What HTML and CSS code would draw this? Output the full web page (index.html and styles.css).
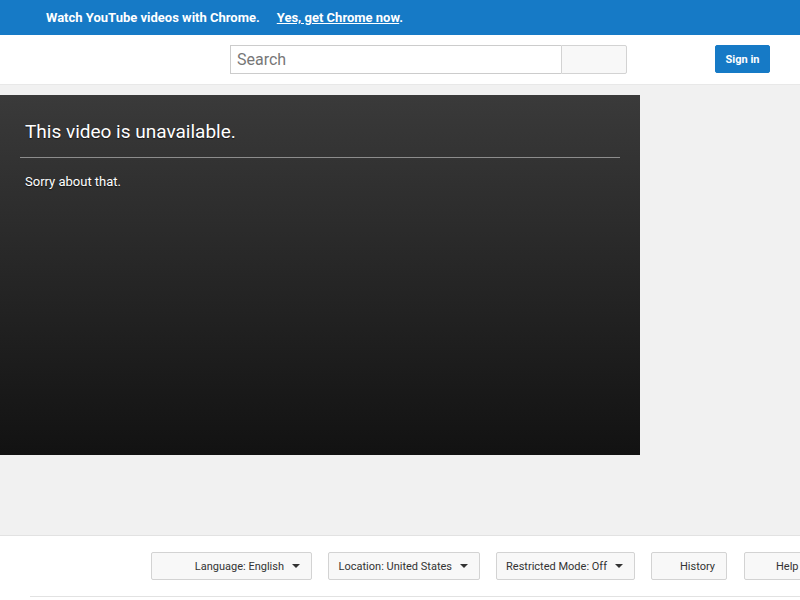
FILE: index.html
```html
<!DOCTYPE html>
<html>
<head>
<meta charset="utf-8">
<link rel="stylesheet" href="styles.css">
</head>
<body>
<div class="banner">
  <span class="banner-text">Watch YouTube videos with Chrome.</span>
  <span class="banner-link"><a href="#">Yes, get Chrome now</a>.</span>
</div>
<header class="masthead">
  <div class="search">
    <input class="search-input" type="text" placeholder="Search">
    <button class="search-btn"></button>
  </div>
  <button class="signin">Sign in</button>
</header>
<main class="content">
  <div class="player">
    <h1 class="player-title">This video is unavailable.</h1>
    <div class="player-rule"></div>
    <p class="player-msg">Sorry about that.</p>
  </div>
</main>
<footer class="footer">
  <div class="footer-buttons">
    <button class="fbtn fbtn-lang">Language: English <span class="caret"></span></button>
    <button class="fbtn fbtn-loc">Location: United States <span class="caret"></span></button>
    <button class="fbtn fbtn-rm">Restricted Mode: Off <span class="caret"></span></button>
    <button class="fbtn fbtn-hist">History</button>
    <button class="fbtn fbtn-help">Help</button>
  </div>
  <div class="footer-rule"></div>
</footer>
</body>
</html>
```
FILE: styles.css
```css
html, body {
  margin: 0;
  padding: 0;
  background: #fff;
  font-family: Roboto, Arial, sans-serif;
  overflow: hidden;
}
.banner {
  height: 35px;
  background: #167ac6;
  color: #fff;
  font-size: 13px;
  font-weight: bold;
  display: flex;
  align-items: center;
  padding-left: 46px;
  box-sizing: border-box;
  white-space: nowrap;
}
.banner-link {
  margin-left: 17px;
}
.banner-link a {
  color: #fff;
  text-decoration: underline;
}
.masthead {
  height: 50px;
  box-sizing: border-box;
  border-bottom: 1px solid #e8e8e8;
  display: flex;
  align-items: flex-start;
  padding-top: 10px;
}
.search {
  display: flex;
  margin-left: 230px;
}
.search-input {
  width: 331px;
  height: 29px;
  box-sizing: border-box;
  border: 1px solid #ccc;
  border-right: none;
  padding: 0 6px;
  font-family: Roboto, Arial, sans-serif;
  font-size: 16px;
  color: #333;
  outline: none;
  margin: 0;
}
.search-input::placeholder {
  color: #777;
}
.search-btn {
  width: 66px;
  height: 29px;
  box-sizing: border-box;
  border: 1px solid #d3d3d3;
  background: #f8f8f8;
  border-radius: 0 2px 2px 0;
  margin: 0;
}
.signin {
  margin-left: 88px;
  width: 55px;
  height: 28px;
  background: #167ac6;
  color: #fff;
  border: 1px solid #167ac6;
  border-radius: 2px;
  font-family: Roboto, Arial, sans-serif;
  font-size: 11px;
  font-weight: bold;
  padding: 0;
}
.content {
  background: #f1f1f1;
  height: 450px;
  padding-top: 10px;
  box-sizing: border-box;
}
.player {
  width: 640px;
  height: 360px;
  background: linear-gradient(to bottom, #3a3a3a 0%, #121212 100%);
  color: #fff;
  padding: 26px 20px 0 20px;
  box-sizing: border-box;
}
.player-title {
  margin: 0 0 0 5px;
  font-size: 19px;
  font-weight: normal;
  line-height: 21px;
  text-shadow: 0 1px 1px rgba(0,0,0,.6);
}
.player-rule {
  height: 1px;
  background: #8c8c8c;
  margin-top: 15px;
}
.player-msg {
  margin: 16px 0 0 5px;
  font-size: 13px;
  line-height: 15px;
  text-shadow: 0 1px 1px rgba(0,0,0,.6);
}
.footer {
  border-top: 1px solid #e2e2e2;
  height: 65px;
  box-sizing: border-box;
  padding-top: 16px;
}
.footer-buttons {
  display: flex;
  gap: 16px;
  margin-left: 151px;
  white-space: nowrap;
}
.fbtn {
  height: 28px;
  box-sizing: border-box;
  border: 1px solid #d3d3d3;
  background: #f8f8f8;
  border-radius: 2px;
  font-family: Roboto, Arial, sans-serif;
  font-size: 11px;
  color: #333;
  display: flex;
  align-items: center;
  justify-content: flex-end;
  padding: 0 11px 0 12px;
  flex-shrink: 0;
  margin: 0;
}
.caret {
  display: inline-block;
  width: 0;
  height: 0;
  border-left: 4px solid transparent;
  border-right: 4px solid transparent;
  border-top: 4px solid #333;
  margin-left: 8px;
  margin-bottom: 1px;
}
.fbtn-lang { width: 161px; }
.fbtn-loc { width: 152px; }
.fbtn-rm { width: 139px; padding-left: 10px; }
.fbtn-hist { width: 76px; }
.fbtn-help { width: 76px; margin-left: 1px; justify-content: flex-start; padding-left: 31px; }
.footer-rule {
  height: 1px;
  background: #e2e2e2;
  margin: 16px 0 0 30px;
}
```
